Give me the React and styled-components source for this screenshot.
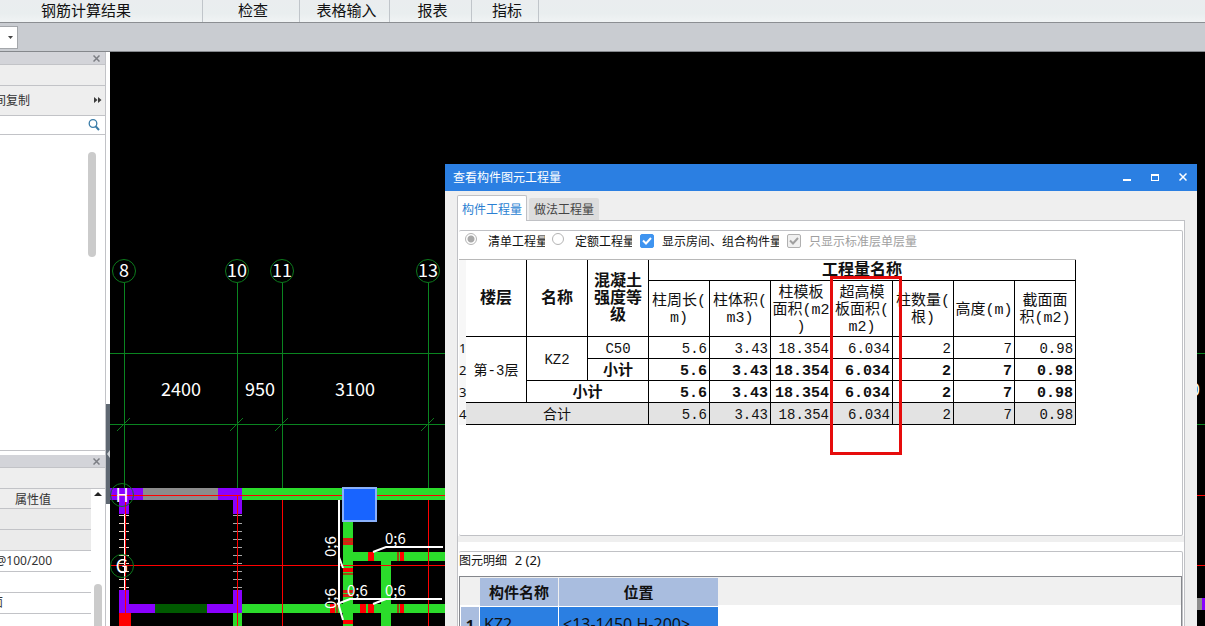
import React from 'react'
import styled, { createGlobalStyle } from 'styled-components'

const QUANTITY_HEADS = [
  ['柱周长(', 'm)'],
  ['柱体积(', 'm3)'],
  ['柱模板', '面积(m2', ')'],
  ['超高模', '板面积(', 'm2)'],
  ['柱数量(', '根)'],
  ['高度(m)'],
  ['截面面', '积(m2)']
]
const QUANTITIES = ['5.6', '3.43', '18.354', '6.034', '2', '7', '0.98']

const AXES = [
  { x: 124, name: '8' },
  { x: 237, name: '10' },
  { x: 282, name: '11' },
  { x: 428, name: '13' }
]
const TICKS = [515, 523, 531, 539, 547, 555, 563, 571, 579, 587]

// [x, y, width, height, fill]
const GREEN = '#2bdc2b'
const PURPLE = '#8a00ff'
const RED = '#ff0000'
const BROWN = '#a04a10'
const WALLS = [
  [242, 488, 300, 12, GREEN],
  [143, 488, 75, 12, '#8c8c8c'],
  [110, 488, 33, 12, PURPLE],
  [218, 488, 24, 12, PURPLE],
  [119, 500, 10, 14, PURPLE],
  [233, 500, 9, 14, PURPLE],
  [242, 604, 300, 9, GREEN],
  [119, 590, 10, 23, PURPLE],
  [129, 604, 26, 9, PURPLE],
  [155, 604, 52, 9, '#005a00'],
  [207, 604, 35, 9, PURPLE],
  [233, 590, 9, 14, PURPLE],
  [119, 613, 12, 13, RED],
  [233, 613, 9, 13, GREEN],
  [343, 522, 10, 104, GREEN],
  [353, 552, 180, 9, GREEN],
  [381, 561, 10, 65, GREEN],
  [1196, 598, 6, 12, '#8c8c8c'],
  [1202, 598, 3, 12, PURPLE]
]
const JOINTS = [
  [343, 538, 10, 3, '#d81e10'],
  [343, 541, 10, 1, BROWN],
  [343, 542, 10, 3, '#d81e10'],
  [343, 568, 10, 4, RED],
  [343, 573, 10, 2, BROWN],
  [343, 590, 10, 3, '#d81e10'],
  [343, 594, 10, 3, '#d81e10'],
  [343, 620, 10, 4, RED],
  [368, 552, 6, 9, RED],
  [397, 552, 2, 9, BROWN],
  [400, 552, 4, 9, RED],
  [330, 604, 5, 9, RED],
  [336, 604, 2, 9, BROWN],
  [360, 604, 6, 9, RED],
  [368, 604, 6, 9, RED],
  [397, 604, 2, 9, BROWN],
  [400, 604, 4, 9, RED]
]
const RED_AXES = [
  [110, 495, 1095, 1, RED],
  [110, 565, 1095, 1, RED],
  [125, 495, 1, 118, RED],
  [237, 495, 1, 131, RED],
  [282, 500, 1, 126, RED],
  [428, 500, 1, 126, RED]
]

function Rects ({ items }) {
  return items.map(([x, y, width, height, fill]) => (
    <rect key={`${x}-${y}-${width}`} x={x} y={y} width={width} height={height} fill={fill} />
  ))
}

function Plan () {
  return (
    <Drawing viewBox='110 52 1095 574' preserveAspectRatio='xMinYMin slice'>
      <g shapeRendering='crispEdges'>
        <g stroke='#0a8420'>
          <path d='M110 353.5H1205M110 424.5H1205' />
          {AXES.map(({ x }) => <path key={x} d={`M${x}.5 283V495`} />)}
        </g>
        <Rects items={WALLS} />
        <Rects items={JOINTS} />
        <path d='M124.5 514V590' stroke='#fff' />
        <path d={TICKS.map(y => `M119 ${y}.5h10`).join('')} stroke='#f0dcd0' />
        <path d={TICKS.map(y => `M233 ${y}.5h9`).join('')} stroke='#a8a8a8' />
        <Rects items={RED_AXES} />
      </g>
      <g fill='none' stroke='#fff' strokeWidth='2'>
        <path d='M339 500V606L343 620M339 557L343 568' />
        <path d='M373 552L386 547H443M337 604L350 599H442M373 604L386 599' />
      </g>
      <rect x='343' y='488' width='33' height='33' fill='#1864ff' stroke='#8ab0fa' strokeWidth='2' />
      <g fill='none' stroke='#0c7a1c'>
        {AXES.map(({ x }) => <circle key={x} cx={x} cy='271' r='11.5' />)}
        {AXES.map(({ x }) => <path key={x} d={`M${x - 7} 431L${x + 6} 418`} />)}
        <circle cx='122' cy='495' r='11.5' />
        <circle cx='122' cy='566' r='11.5' />
      </g>
      <g fill='#fff' fontSize='18' textAnchor='middle'>
        {AXES.map(({ x, name }) => <text key={x} x={x} y='277'>{name}</text>)}
        <text x='181' y='396'>2400</text>
        <text x='260' y='396'>950</text>
        <text x='355' y='396'>3100</text>
        <text x='1195' y='396'>0</text>
        <text x='122' y='502'>H</text>
        <text x='122' y='573'>G</text>
      </g>
      <g fill='#fff' fontSize='15'>
        <text x='385' y='544'>0;6</text>
        <text x='347' y='596'>0;6</text>
        <text x='385' y='596'>0;6</text>
        <text transform='translate(336 557) rotate(-90)'>0;6</text>
        <text transform='translate(336 609) rotate(-90)'>0;6</text>
      </g>
    </Drawing>
  )
}

function CloseMark () {
  return (
    <svg width='7' height='7' viewBox='0 0 7 7' fill='none' stroke='#7c7e84' strokeWidth='1.5'>
      <path d='M0.5 0.5L6.5 6.5M6.5 0.5L0.5 6.5' />
    </svg>
  )
}

function Sidebar () {
  return (
    <Side>
      <Dock>
        <DockTitle><IconButton aria-label='关闭'><CloseMark /></IconButton></DockTitle>
        <DockBar $height={21} />
        <DockBar $height={30}>
          <Clipped $width={30}>层间复制</Clipped>
          <IconButton aria-label='更多'>
            <svg width='8' height='6' viewBox='0 0 8 6' fill='#3c3c3c'>
              <path d='M0 0L3.5 3L0 6ZM4 0L7.5 3L4 6Z' />
            </svg>
          </IconButton>
        </DockBar>
        <SearchRow>
          <SearchInput aria-label='搜索' />
          <svg width='12' height='12' viewBox='0 0 12 12' fill='none' stroke='#3a7ca8'>
            <circle cx='5' cy='4.5' r='3.8' strokeWidth='1.3' />
            <path d='M7.8 7.5L11 11' strokeWidth='2' />
          </svg>
        </SearchRow>
        <TreeArea><Thumb $height={105} /></TreeArea>
      </Dock>
      <Dock>
        <DockTitle><IconButton aria-label='关闭'><CloseMark /></IconButton></DockTitle>
        <DockBar $height={21} />
        <PropArea>
          <div>
            <PropHead>属性值</PropHead>
            <PropRow $shade />
            <PropRow $shade />
            <PropRow><Clipped $width={52}>@100/200</Clipped></PropRow>
            <PropRow />
            <PropRow><Clipped $width={3}>面</Clipped></PropRow>
            <PropRow />
          </div>
          <PropScroll>
            <svg width='8' height='4' viewBox='0 0 8 4'><path d='M0 4L4 0L8 4Z' fill='#222' /></svg>
            <Thumb $height={80} />
          </PropScroll>
        </PropArea>
      </Dock>
    </Side>
  )
}

function Values ({ bold }) {
  return QUANTITIES.map((value, i) => <Num key={i} $bold={bold}>{value}</Num>)
}

function QuantityTable () {
  return (
    <Quantities>
      <colgroup>
        <col style={{ width: 7 }} />
        {Array.from({ length: 10 }, (_, i) => <col key={i} style={{ width: 61 }} />)}
      </colgroup>
      <thead>
        <HeadRow $height={21}>
          <RowNo as='th' rowSpan={2} />
          <Head rowSpan={2} $bold>楼层</Head>
          <Head rowSpan={2} $bold>名称</Head>
          <Head rowSpan={2} $bold>混凝土<br />强度等<br />级</Head>
          <Head colSpan={7} $bold>工程量名称</Head>
        </HeadRow>
        <HeadRow $height={56}>
          {QUANTITY_HEADS.map(lines => (
            <Head key={lines[0]}>
              {lines.map(line => <HeadLine key={line}>{line}</HeadLine>)}
            </Head>
          ))}
        </HeadRow>
      </thead>
      <tbody>
        <Row>
          <RowNo>1</RowNo>
          <Cell rowSpan={3}>第-3层</Cell>
          <Cell rowSpan={2}>KZ2</Cell>
          <Cell>C50</Cell>
          <Values />
        </Row>
        <Row>
          <RowNo>2</RowNo>
          <Cell $bold>小计</Cell>
          <Values bold />
        </Row>
        <Row>
          <RowNo>3</RowNo>
          <Cell colSpan={2} $bold>小计</Cell>
          <Values bold />
        </Row>
        <Row $total>
          <RowNo>4</RowNo>
          <Cell colSpan={3}>合计</Cell>
          <Values />
        </Row>
      </tbody>
    </Quantities>
  )
}

function QuantityDialog () {
  return (
    <Dialog>
      <TitleBar>
        <span>查看构件图元工程量</span>
        <WindowButtons>
          <IconButton aria-label='最小化'>
            <svg width='8' height='8' viewBox='0 0 8 8'><path d='M0 6H8V8H0Z' fill='#fff' /></svg>
          </IconButton>
          <IconButton aria-label='最大化'>
            <svg width='8' height='8' viewBox='0 0 8 8' shapeRendering='crispEdges'>
              <path d='M0 1H8V8H0ZM1 3V7H7V3Z' fill='#fff' fillRule='evenodd' />
            </svg>
          </IconButton>
          <IconButton aria-label='关闭'>
            <svg width='8' height='8' viewBox='0 0 8 8' fill='none' stroke='#fff' strokeWidth='1.5'>
              <path d='M0.5 0.5L7.5 7.5M7.5 0.5L0.5 7.5' />
            </svg>
          </IconButton>
        </WindowButtons>
      </TitleBar>
      <DialogBody>
        <Tabs role='tablist'>
          <Tab role='tab' aria-selected='true' $active>构件工程量</Tab>
          <Tab role='tab' aria-selected='false'>做法工程量</Tab>
        </Tabs>
        <Page>
          <Panel>
            <Options>
              <Radio type='radio' name='kind' id='bill' defaultChecked />
              <OptionLabel htmlFor='bill' $width={57}>清单工程量</OptionLabel>
              <Radio type='radio' name='kind' id='quota' />
              <OptionLabel htmlFor='quota' $width={57} $gap={8}>定额工程量</OptionLabel>
              <Check>
                <input type='checkbox' id='rooms' defaultChecked />
                <CheckTick color='#fff' />
              </Check>
              <OptionLabel htmlFor='rooms' $width={117} $gap={8}>显示房间、组合构件量</OptionLabel>
              <Check $disabled>
                <input type='checkbox' id='single' defaultChecked disabled />
                <CheckTick color='#a0a0a0' />
              </Check>
              <OptionLabel htmlFor='single' $disabled>只显示标准层单层量</OptionLabel>
            </Options>
            <TableArea>
              <QuantityTable />
              <Highlight />
            </TableArea>
          </Panel>
          <Splitter />
          <Panel>
            <DetailCaption>图元明细 <span>2 (2)</span></DetailCaption>
            <DetailArea>
              <Details>
                <colgroup>
                  <col style={{ width: 18 }} />
                  <col style={{ width: 78 }} />
                  <col style={{ width: 159 }} />
                </colgroup>
                <thead>
                  <tr>
                    <DetailCorner />
                    <DetailHead>构件名称</DetailHead>
                    <DetailHead>位置</DetailHead>
                  </tr>
                </thead>
                <tbody>
                  <tr>
                    <DetailHead>1</DetailHead>
                    <DetailCell>KZ2</DetailCell>
                    <DetailCell>&lt;13-1450,H-200&gt;</DetailCell>
                  </tr>
                </tbody>
              </Details>
            </DetailArea>
          </Panel>
        </Page>
      </DialogBody>
    </Dialog>
  )
}

function CheckTick ({ color }) {
  return (
    <svg width='10' height='8' viewBox='0 0 10 8' fill='none' stroke={color} strokeWidth='2'>
      <path d='M1 3.5L4 6.5L9 1' />
    </svg>
  )
}

export default function App () {
  return (
    <Shell>
      <GlobalStyle />
      <Ribbon>
        <RibbonGroup $width={203} $start>钢筋计算结果</RibbonGroup>
        <RibbonGroup $width={97}>检查</RibbonGroup>
        <RibbonGroup $width={90}>表格输入</RibbonGroup>
        <RibbonGroup $width={82}>报表</RibbonGroup>
        <RibbonGroup $width={67}>指标</RibbonGroup>
      </Ribbon>
      <Toolbar>
        <Combo>
          <select aria-label='楼层'><option /></select>
          <svg width='5' height='3' viewBox='0 0 5 3'><path d='M0 0H5L2.5 3Z' fill='#444' /></svg>
        </Combo>
      </Toolbar>
      <Workspace>
        <Sidebar />
        <Gutter>
          <Handle aria-label='折叠'>
            <svg width='3' height='8' viewBox='0 0 3 8'><path d='M3 0L0 4L3 8Z' fill='#d0d4d8' /></svg>
          </Handle>
        </Gutter>
        <Canvas>
          <Plan />
          <QuantityDialog />
        </Canvas>
      </Workspace>
    </Shell>
  )
}

const GlobalStyle = createGlobalStyle`
  *, *::before, *::after {
    box-sizing: border-box;
  }
  body {
    margin: 0;
    overflow: hidden;
    font: 12px/16px 'Noto Sans CJK SC', sans-serif;
    color: #111;
  }
  svg {
    display: block;
    flex: none;
  }
`

const Shell = styled.div`
  height: 100vh;
  display: flex;
  flex-direction: column;
`

const Ribbon = styled.header`
  display: flex;
  height: 23px;
  flex: none;
  background: linear-gradient(#eaedef, #e9eeef 60%, #f0f3f4);
  border-bottom: 1px solid #8b8e92;
`

const RibbonGroup = styled.div`
  width: ${p => p.$width}px;
  padding-left: ${p => p.$start ? 41 : 4}px;
  text-align: ${p => p.$start ? 'left' : 'center'};
  border-right: 1px solid #c0c5ca;
  font-size: 15px;
  line-height: 20px;
`

const Toolbar = styled.div`
  height: 29px;
  flex: none;
  padding-top: 3px;
  background: #c9ccd1;
  border-bottom: 1px solid #85888c;
`

const Combo = styled.div`
  width: 18px;
  height: 23px;
  display: flex;
  align-items: center;
  justify-content: flex-end;
  padding-right: 4px;
  background: #fff;
  border: 1px solid #a4a7ab;
  border-left: 0;

  select {
    appearance: none;
    flex: 1;
    min-width: 0;
    border: 0;
    padding: 0;
    background: none;
  }
`

const Workspace = styled.div`
  flex: 1;
  min-height: 0;
  display: flex;
`

const Side = styled.aside`
  width: 106px;
  flex: none;
  display: flex;
  flex-direction: column;
  gap: 4px;
  overflow: hidden;
  background: #fff;
  border-right: 1px solid #c2c3c7;
  color: #333;
`

const Dock = styled.section`
  display: flex;
  flex-direction: column;
  flex: none;
`

const IconButton = styled.button`
  display: flex;
  padding: 0;
  border: 0;
  background: none;
`

const DockTitle = styled.div`
  height: 12px;
  display: flex;
  align-items: center;
  justify-content: flex-end;
  padding-right: 5px;
  background: #d3d4d9;
`

const DockBar = styled.div`
  height: ${p => p.$height}px;
  display: flex;
  align-items: center;
  justify-content: space-between;
  padding: 0 3px 2px 0;
  background: #eeeeee;
  border-top: 1px solid #c2c3c7;
`

const Clipped = styled.span`
  width: ${p => p.$width}px;
  display: flex;
  justify-content: flex-end;
  overflow: hidden;
  white-space: nowrap;
`

const SearchRow = styled.label`
  height: 20px;
  display: flex;
  align-items: center;
  padding-right: 5px;
  border-top: 1px solid #c2c3c7;
  border-bottom: 1px solid #c2c3c7;
`

const SearchInput = styled.input`
  flex: 1;
  min-width: 0;
  border: 0;
  background: none;
`

const TreeArea = styled.div`
  height: 316px;
  padding: 17px 9px 0 0;
  display: flex;
  justify-content: flex-end;
  border-bottom: 1px solid #c2c3c7;
`

const Thumb = styled.div`
  width: 8px;
  height: ${p => p.$height}px;
  border-radius: 4px;
  background: #cbcbcb;
`

const PropArea = styled.div`
  display: grid;
  grid-template-columns: 1fr 14px;
  border-top: 1px solid #c2c3c7;
`

const PropRow = styled.div`
  height: 21px;
  display: flex;
  align-items: center;
  font-family: 'Noto Sans', 'Noto Sans CJK SC', sans-serif;
  background: ${p => p.$shade ? '#ebebeb' : '#fff'};
  border-bottom: 1px solid #c2c3c7;
`

const PropHead = styled(PropRow)`
  height: 20px;
  padding: 2px 0 0 15px;
  background: #eeeeee;
`

const PropScroll = styled.div`
  display: flex;
  flex-direction: column;
  align-items: center;
  justify-content: space-between;
  padding-top: 3px;
  height: 175px;
`

const Gutter = styled.div`
  width: 4px;
  flex: none;
  padding-top: 352px;
  background: #fff;
`

const Handle = styled(IconButton)`
  width: 4px;
  height: 100px;
  align-items: center;
  justify-content: flex-end;
  background: #5f6872;
`

const Canvas = styled.main`
  flex: 1;
  position: relative;
  overflow: hidden;
  background: #000;
`

const Drawing = styled.svg`
  width: 100%;
  height: 100%;
`

/* floats over the plan and runs past the bottom edge */
const Dialog = styled.section`
  position: absolute;
  top: 112px;
  left: 335px;
  right: 8px;
  background: #efefef;
`

const TitleBar = styled.header`
  height: 27px;
  display: flex;
  align-items: center;
  justify-content: space-between;
  padding: 0 10px 1px 8px;
  background: #2b7fe2;
  color: #fff;
`

const WindowButtons = styled.div`
  display: flex;
  gap: 20px;
`

const DialogBody = styled.div`
  padding: 4px 12px 12px;
`

const Tabs = styled.div`
  display: flex;
  align-items: flex-end;
  gap: 2px;
`

const Tab = styled.button`
  height: ${p => p.$active ? 26 : 22}px;
  width: 70px;
  padding: 0;
  margin-bottom: ${p => p.$active ? -1 : 0}px;
  font: inherit;
  color: ${p => p.$active ? '#2b7fd2' : '#444'};
  background: ${p => p.$active ? '#fff' : '#dddddd'};
  border: ${p => p.$active ? '1px solid #c0c1c5' : '0'};
  border-bottom: 0;
  border-radius: 2px 2px 0 0;
`

const Page = styled.div`
  padding-top: 9px;
  background: #fff;
  border: 1px solid #c0c1c5;
`

const Panel = styled.div`
  margin: 0 1px;
  border: 1px solid #c0c1c5;
  border-left: 0;
  border-radius: 2px;
`

const Options = styled.div`
  height: 28px;
  display: flex;
  align-items: center;
  padding: 0 0 8px 6px;
`

const Radio = styled.input`
  appearance: none;
  width: 12px;
  height: 12px;
  flex: none;
  margin: 0 11px 4px 0;
  border: 1px solid #b4b4b4;
  border-radius: 50%;
  background: #fff;

  &:checked {
    background: radial-gradient(circle, #a8a8a8 3px, #fff 4px);
  }
`

const OptionLabel = styled.label`
  flex: none;
  width: ${p => p.$width ? `${p.$width}px` : 'auto'};
  margin-right: ${p => p.$gap || 7}px;
  overflow: hidden;
  white-space: nowrap;
  color: ${p => p.$disabled ? '#a0a0a0' : '#111'};
`

const Check = styled.span`
  display: grid;
  place-items: center;
  flex: none;
  width: 14px;
  height: 14px;
  margin-right: 8px;
  border: 1px solid ${p => p.$disabled ? '#b0b0b0' : '#3f94f0'};
  border-radius: 2px;
  background: ${p => p.$disabled ? '#f0f0f0' : '#3f94f0'};

  input,
  svg {
    grid-area: 1 / 1;
  }
  input {
    appearance: none;
    width: 12px;
    height: 12px;
    margin: 0;
  }
`

const TableArea = styled.div`
  position: relative;
  height: 276px;
`

const Quantities = styled.table`
  table-layout: fixed;
  width: 617px;
  border-spacing: 0;
  border-top: 1px solid #b8b8b8;
  font: 14px/17px 'Liberation Mono', 'Noto Sans CJK SC', monospace;
  color: #111;
`

const HeadRow = styled.tr`
  height: ${p => p.$height}px;
`

const Row = styled.tr`
  height: 22px;
  background: ${p => p.$total ? '#e3e3e3' : '#fff'};
`

const RowNo = styled.td`
  padding: 0;
  background: #f7f7f7;
  font: 13px/16px 'Noto Sans', sans-serif;
`

const Cell = styled.td`
  padding: 4px 0 0;
  text-align: center;
  font-size: ${p => p.$bold ? 15 : 14}px;
  font-weight: ${p => p.$bold ? 700 : 400};
  border-right: 1px solid #000;
  border-bottom: 1px solid #000;
`

const Num = styled(Cell)`
  padding-right: 2px;
  text-align: right;
`

const Head = styled(Cell).attrs({ as: 'th' })`
  padding-top: 3px;
  font-size: ${p => p.$bold ? 16 : 15}px;
`

const HeadLine = styled.span`
  display: block;
  white-space: nowrap;
`

/* red marker box round one column */
const Highlight = styled.div`
  position: absolute;
  top: 17px;
  left: 371px;
  width: 72px;
  height: 179px;
  border: 3px solid #e60c0c;
`

const Splitter = styled.div`
  height: 15px;
  border-bottom: 9px solid #fff;
  background: #efefef;
`

const DetailCaption = styled.div`
  height: 24px;
  line-height: 16px;

  span {
    margin-left: 5px;
    font: 13px/16px 'Noto Sans', sans-serif;
  }
`

const DetailArea = styled.div`
  background: linear-gradient(#f0f0f0 28px, #fff 28px);
  border: 1px solid #85878c;
`

const Details = styled.table`
  table-layout: fixed;
  width: 259px;
  border-spacing: 1px;
  font: 16px/20px 'Noto Sans', 'Noto Sans CJK SC', sans-serif;
`

const DetailCorner = styled.th`
  padding: 0;
  height: 28px;
`

const DetailHead = styled.th`
  padding: 0;
  background: #a9bddf;
  font-size: 15px;
`

const DetailCell = styled.td`
  height: 34px;
  padding: 0 4px;
  background: #2b7fe2;
  white-space: nowrap;
`
